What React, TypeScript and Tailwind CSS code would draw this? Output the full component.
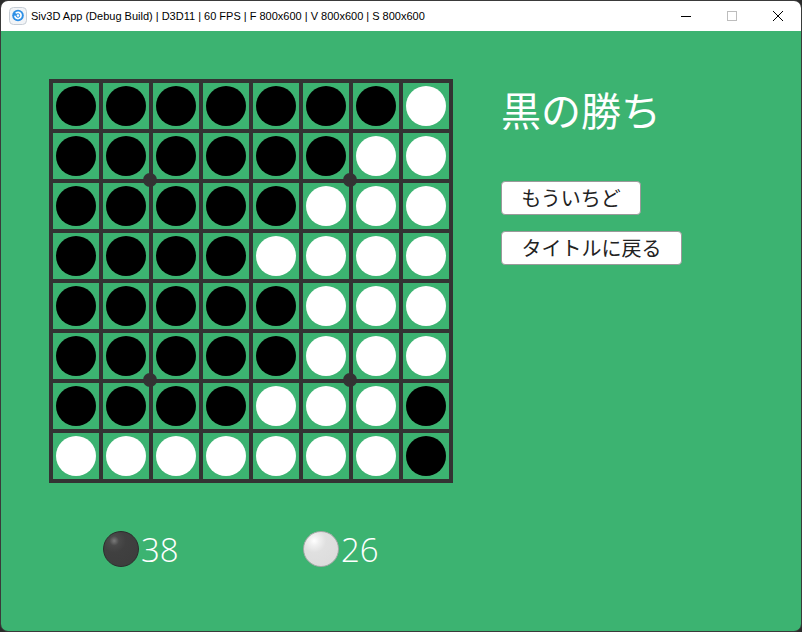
import React from 'react';

const BOARD = [
  'BBBBBBBW',
  'BBBBBBWW',
  'BBBBBWWW',
  'BBBBWWWW',
  'BBBBBWWW',
  'BBBBBWWW',
  'BBBBWWWB',
  'WWWWWWWB',
];

const jp = { fontFamily: '"Noto Sans CJK JP", "Noto Sans", sans-serif' };

const AppIcon = () => (
  <svg width="18" height="18" viewBox="0 0 18 18">
    <rect x="0.5" y="0.5" width="17" height="17" rx="4" fill="#f2f4f7" stroke="#c7ced6" />
    <circle cx="9" cy="8.5" r="5.8" fill="#2d8fe6" />
    <path d="M6 9.4a3.1 3.1 0 1 0 1.3-3.6" stroke="#fff" strokeWidth="1.7" fill="none" strokeLinecap="round" />
    <circle cx="9" cy="8.5" r="1.3" fill="#fff" />
  </svg>
);

const TitleBar = () => (
  <div className="flex h-[30px] items-center bg-white text-black">
    <div className="ml-[8px] mr-[4px] flex items-center">
      <AppIcon />
    </div>
    <span className="text-[11px] leading-none" style={{ fontFamily: '"Liberation Sans", Arial, sans-serif' }}>
      Siv3D App (Debug Build) | D3D11 | 60 FPS | F 800x600 | V 800x600 | S 800x600
    </span>
    <div className="ml-auto flex h-full items-center">
      <div className="flex h-full w-[46px] items-center justify-center">
        <div className="h-px w-[10px] bg-black" />
      </div>
      <div className="flex h-full w-[46px] items-center justify-center">
        <div className="h-[10px] w-[10px] border border-[#bdbdbd]" />
      </div>
      <div className="flex h-full w-[46px] items-center justify-center">
        <svg width="12" height="12" viewBox="0 0 12 12">
          <path d="M1 1L11 11M11 1L1 11" stroke="#000" strokeWidth="1" />
        </svg>
      </div>
    </div>
  </div>
);

const Board = () => (
  <div className="relative">
    <div className="grid grid-cols-8 gap-[4px] bg-[#333333] p-[4px]">
      {BOARD.flatMap((row, r) =>
        row.split('').map((c, i) => (
          <div key={`${r}-${i}`} className="flex h-[46px] w-[46px] items-center justify-center bg-[#3cb371]">
            <div className={`h-[40px] w-[40px] rounded-full ${c === 'B' ? 'bg-black' : 'bg-white'}`} />
          </div>
        ))
      )}
    </div>
    {/* star points */}
    <div className="absolute left-[94px] top-[94px] h-[14px] w-[14px] rounded-full bg-[#333333]" />
    <div className="absolute left-[294px] top-[94px] h-[14px] w-[14px] rounded-full bg-[#333333]" />
    <div className="absolute left-[94px] top-[294px] h-[14px] w-[14px] rounded-full bg-[#333333]" />
    <div className="absolute left-[294px] top-[294px] h-[14px] w-[14px] rounded-full bg-[#333333]" />
  </div>
);

const Button = ({ label, width }: { label: string; width: string }) => (
  <button
    className={`flex h-[34px] ${width} items-center justify-center rounded-[4px] border border-[#9a9a9a] bg-white text-[20px] leading-none text-[#222]`}
    style={jp}
  >
    {label}
  </button>
);

const Score = ({ white, value }: { white: boolean; value: number }) => (
  <div className="flex w-[200px] items-center">
    <div
      className={`h-[36px] w-[36px] rounded-full border-[1.5px] ${
        white
          ? 'border-[#a8a8a8] bg-[radial-gradient(circle_at_30%_26%,#ffffff_0%,#f0f0f0_14%,#e0e0e0_34%,#dadada_100%)]'
          : 'border-[#2c2c2c] bg-[radial-gradient(circle_at_30%_26%,#7a7a7a_0%,#4a4a4a_14%,#404040_34%,#3c3c3c_100%)]'
      }`}
    />
    <span className="ml-[2px] text-[33px] font-light leading-none text-white" style={{ fontFamily: '"Open Sans", "Noto Sans", sans-serif' }}>
      {value}
    </span>
  </div>
);

export default function App() {
  return (
    <div className="h-[632px] w-[802px] bg-[#2b2b2b]">
      <div className="flex h-full w-full flex-col overflow-hidden rounded-[8px] border border-[#3a3a3a]">
        <TitleBar />
        <div className="flex-1 bg-[#3cb371]">
          <div className="flex pl-[48px] pt-[48px]">
            <Board />
            <div className="ml-[48px] flex flex-col pt-[6px]">
              <div className="text-[40px] leading-[48px] text-white" style={jp}>
                黒の勝ち
              </div>
              <div className="mt-[48px] flex flex-col gap-[16px]">
                <Button label="もういちど" width="w-[140px]" />
                <Button label="タイトルに戻る" width="w-[181px]" />
              </div>
            </div>
          </div>
          <div className="mt-[48px] flex pl-[102px]">
            <Score white={false} value={38} />
            <Score white value={26} />
          </div>
        </div>
      </div>
    </div>
  );
}
